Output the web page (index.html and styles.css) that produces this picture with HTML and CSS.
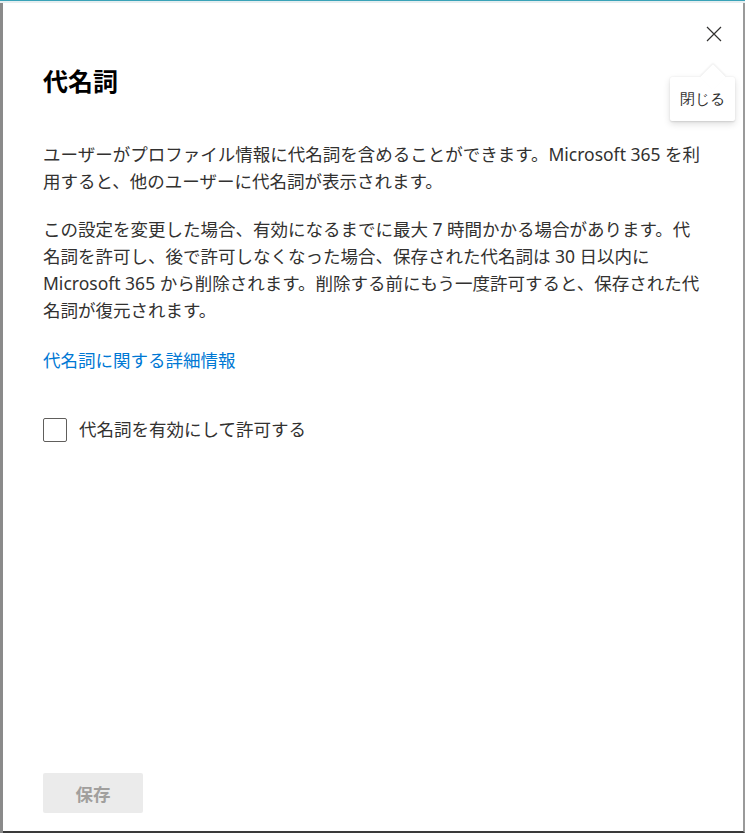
FILE: index.html
```html
<!DOCTYPE html>
<html lang="ja">
<head>
    <meta charset="UTF-8">
    <meta name="viewport" content="width=device-width, initial-scale=1.0">
    <title>代名詞</title>
    <link rel="stylesheet" href="styles.css">
</head>
<body>
    <div class="top-strip"></div>
    <div class="panel">
        <div class="panel-header">
            <button class="close-btn" aria-label="閉じる">
                <svg width="16" height="16" viewBox="0 0 16 16">
                    <path d="M1 1 L15 15 M15 1 L1 15" stroke="#323130" stroke-width="1.2" fill="none"/>
                </svg>
                <span class="tooltip"><span class="beak"></span>閉じる</span>
            </button>
        </div>
        <div class="panel-content">
            <div class="title">代名詞</div>
            <p class="text first">ユーザーがプロファイル情報に代名詞を含めることができます。Microsoft 365 を利用すると、他のユーザーに代名詞が表示されます。</p>
            <p class="text">この設定を変更した場合、有効になるまでに最大 7 時間かかる場合があります。代名詞を許可し、後で許可しなくなった場合、保存された代名詞は 30 日以内に Microsoft 365 から削除されます。削除する前にもう一度許可すると、保存された代名詞が復元されます。</p>
            <a class="link" href="#">代名詞に関する詳細情報</a>
            <label class="check-row">
                <span class="check-box"></span>
                <span>代名詞を有効にして許可する</span>
            </label>
        </div>
        <div class="panel-footer">
            <button class="save-btn" disabled>保存</button>
        </div>
    </div>
</body>
</html>
```

FILE: styles.css
```css
* {
    margin: 0;
    padding: 0;
    box-sizing: border-box;
}
body {
    font-family: "Segoe UI", "Noto Sans", "Noto Sans CJK JP", sans-serif;
    background-color: #8a8a8a;
    color: #323130;
    width: 745px;
    height: 833px;
    overflow: hidden;
}
.top-strip {
    height: 3px;
    border-top: 1px solid #3aa3b8;
    background-color: #e6eef0;
}
.panel {
    margin-left: 3px;
    height: 830px;
    background: #ffffff;
    border-right: 2px solid #9a9a9a;
    border-bottom: 2px solid #3a3a3a;
    display: flex;
    flex-direction: column;
}
.panel-header {
    display: flex;
    justify-content: flex-end;
    padding: 11px 9px 0 0;
}
.close-btn {
    position: relative;
    width: 40px;
    height: 40px;
    border: none;
    background: none;
    display: flex;
    align-items: center;
    justify-content: center;
    cursor: pointer;
}
.tooltip {
    position: absolute;
    top: 63px;
    right: -1px;
    padding: 12px 10px;
    font-family: inherit;
    font-size: 15px;
    line-height: 20px;
    white-space: nowrap;
    color: #323130;
    background: #ffffff;
    border-radius: 2px;
    box-shadow: 0 3px 7px rgba(0, 0, 0, 0.13), 0 0.6px 1.8px rgba(0, 0, 0, 0.11);
}
.beak {
    position: absolute;
    top: -9px;
    left: 34px;
    width: 18px;
    height: 18px;
    background: #ffffff;
    transform: rotate(45deg);
    box-shadow: -1px -1px 2px rgba(0, 0, 0, 0.07);
}
.panel-content {
    padding: 0 40px;
    font-size: 17.5px;
    line-height: 27px;
}
.title {
    margin-top: 11px;
    font-size: 25px;
    line-height: 32px;
    font-weight: 700;
    color: #000000;
}
.text {
    margin-top: 21px;
}
.text.first {
    margin-top: 44px;
}
.link {
    display: block;
    margin-top: 23px;
    color: #0078d4;
    text-decoration: none;
}
.check-row {
    display: flex;
    align-items: center;
    gap: 12px;
    margin-top: 42px;
}
.check-box {
    width: 24px;
    height: 24px;
    border: 1px solid #605e5c;
    border-radius: 2px;
}
.panel-footer {
    margin-top: auto;
    padding: 0 40px 18px;
}
.save-btn {
    width: 100px;
    height: 40px;
    border: none;
    border-radius: 2px;
    background-color: #ebebeb;
    color: #a19f9d;
    font-family: inherit;
    font-size: 17.5px;
    font-weight: 700;
}
```
